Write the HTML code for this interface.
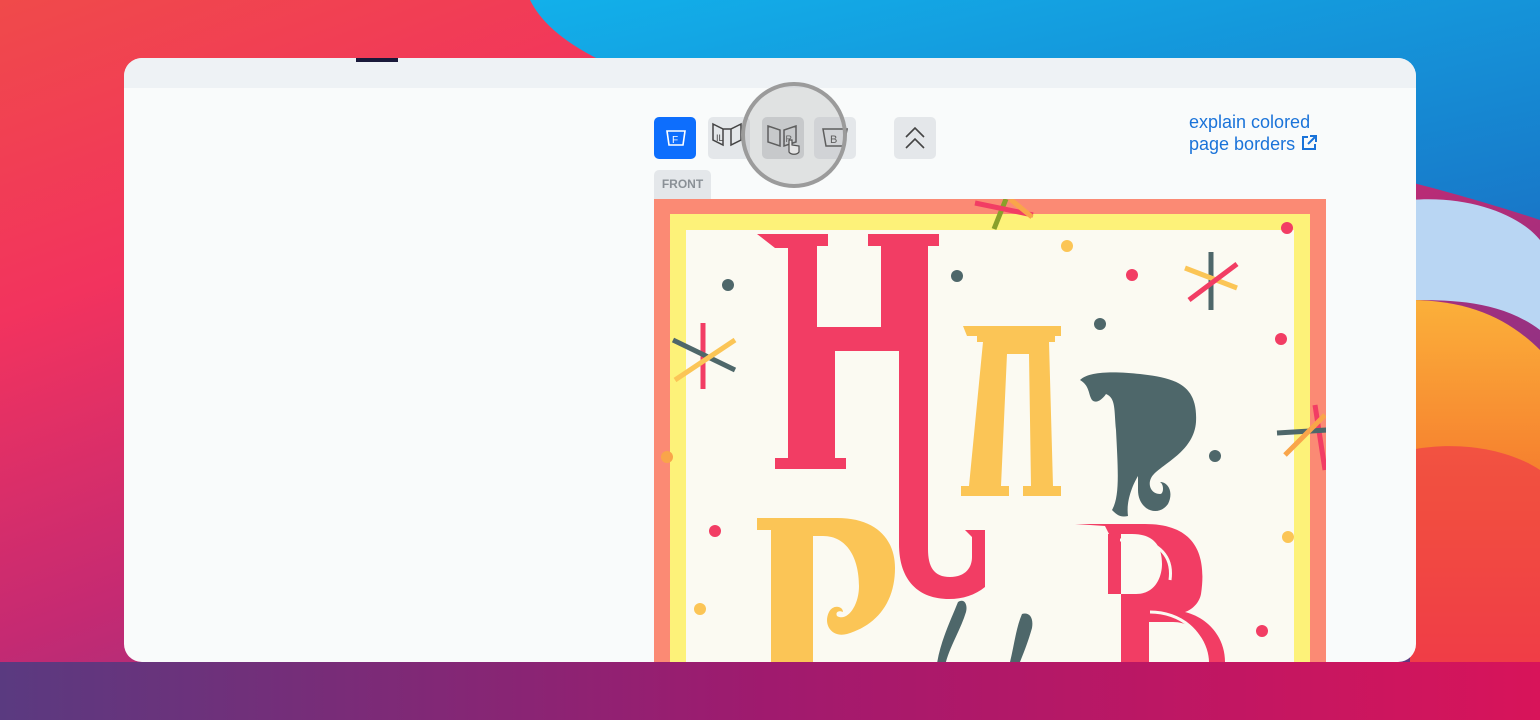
<!DOCTYPE html>
<html><head><meta charset="utf-8"><style>
html,body{margin:0;padding:0;width:1540px;height:720px;overflow:hidden;font-family:"Liberation Sans",sans-serif;background:#8a3386}
.bg{position:absolute;left:0;top:0;width:1540px;height:720px;background:
linear-gradient(160deg,#f04a4a 0%,#f2335e 25%,#c52a72 50%,#8a3386 75%,#4a3b7c 100%);}
.blue{position:absolute;left:0;top:0;width:1540px;height:720px;overflow:hidden}
.win{position:absolute;left:124px;top:58px;width:1292px;height:604px;background:#f9fbfb;border-radius:18px;overflow:hidden}
.top{position:absolute;left:0;top:0;width:100%;height:30px;background:#eef2f5}
.btn{position:absolute;top:59px;width:42px;height:42px;border-radius:5px;background:#e4e7ea}
</style></head><body>
<div class="bg"></div>
<svg class="blue" width="1540" height="720" viewBox="0 0 1540 720">
<defs><linearGradient id="bl" x1="0" y1="0" x2="1" y2="1"><stop offset="0" stop-color="#12b0ea"/><stop offset="1" stop-color="#1877c8"/></linearGradient>
<linearGradient id="or" x1="0" y1="0" x2="0" y2="1"><stop offset="0" stop-color="#fbb03a"/><stop offset="0.5" stop-color="#f5752c"/><stop offset="1" stop-color="#ee2b4c"/></linearGradient>
<linearGradient id="bt" x1="0" y1="0" x2="1" y2="0"><stop offset="0" stop-color="#5a3a80"/><stop offset="0.5" stop-color="#a01a6e"/><stop offset="1" stop-color="#d8145a"/></linearGradient></defs>
<path d="M530 0H1540V220C1450 190 1300 150 1100 120C900 90 700 60 600 60C560 40 540 20 530 0Z" fill="url(#bl)"/>
<path d="M1410 200C1470 195 1520 215 1540 240V330C1500 300 1450 300 1410 300Z" fill="#b9d6f3"/>
<path d="M1410 300C1470 300 1510 320 1540 350V720H1410Z" fill="url(#or)"/>
<path d="M1410 450C1460 440 1510 450 1540 470V720H1410Z" fill="#ef3c48" opacity="0.7"/>
<rect x="0" y="662" width="1540" height="58" fill="url(#bt)"/>
</svg>
<div class="win"><div class="top"></div>
<div style="position:absolute;left:232px;top:0;width:42px;height:4px;background:#1a1a3a"></div>
</div>
<div style="position:absolute;left:124px;top:58px;width:1292px;height:604px;border-radius:18px;overflow:hidden">
<div class="btn" style="left:530px;background:#0d6efd"></div>
<div class="btn" style="left:584px"></div>
<div class="btn" style="left:638px;background:#d6d9dc"></div>
<div class="btn" style="left:690px"></div>
<div class="btn" style="left:770px"></div>
<div style="position:absolute;left:530px;top:112px;width:57px;height:30px;background:#e4e7ea;border-radius:5px 5px 0 0;font-size:12px;font-weight:bold;color:#8a9096;text-align:center;line-height:28px">FRONT</div>
<div style="position:absolute;left:1065px;top:53px;font-size:18px;line-height:22px;color:#1a73d9">explain colored<br>page borders <svg width="18" height="18" viewBox="0 0 18 18" style="vertical-align:-2px"><path d="M8 3H3v12h12v-5M10 2h6v6M16 2l-8 8" fill="none" stroke="#1a73d9" stroke-width="2"/></svg></div>
</div>
<svg style="position:absolute;left:0;top:0" width="1540" height="720" viewBox="0 0 1540 720">
<defs><clipPath id="cc"><rect x="654" y="199" width="672" height="463"/></clipPath></defs>
<!-- icons -->
<path d="M667 131h18l-2 14h-14z" fill="none" stroke="#fff" stroke-width="1.6"/><text x="672" y="143" font-size="10" fill="#fff" font-family="Liberation Sans">F</text>
<path d="M713 124l10 5v16l-10-5zM741 124l-10 5v16l10-5zM723 129h8" fill="none" stroke="#444" stroke-width="1.5"/><text x="716" y="141" font-size="9" fill="#444" font-family="Liberation Sans">IL</text>
<path d="M768 126l12 4v16l-12-4zM796 126l-12 4v16l12-4z" fill="none" stroke="#444" stroke-width="1.5"/><text x="783" y="142" font-size="9" fill="#444" font-family="Liberation Sans">IR</text>
<path d="M789 140v12c2 3 8 3 10 0v-6l-7-1v-5z" fill="#fff" stroke="#333" stroke-width="1.2"/>
<path d="M823 129h24l-3 17h-18z" fill="none" stroke="#444" stroke-width="1.5"/><text x="830" y="143" font-size="11" fill="#444" font-family="Liberation Sans">B</text>
<path d="M906 137l9-9 9 9M906 148l9-9 9 9" fill="none" stroke="#444" stroke-width="1.6"/>
<circle cx="794" cy="135" r="51" fill="rgba(160,160,160,0.28)" stroke="#9b9b9b" stroke-width="4"/>
<!-- card -->
<g clip-path="url(#cc)">
<rect x="654" y="199" width="672" height="463" fill="#fb8a74"/>
<rect x="670" y="214" width="640" height="448" fill="#fdf279"/>
<rect x="686" y="230" width="608" height="432" fill="#fbfaf2"/>
<!-- H -->
<path d="M757 234h71v12h-11v81h64v-81h-13v-12h71v12h-11v303c0 18 6 28 22 28s22-10 22-20v-20l-7-7h20v57c-10 8-22 12-36 12-30 0-50-18-50-55v-193h-64v107h11v11h-71v-11h13v-210h-13z" fill="#f23d64"/>
<!-- A -->
<path d="M963 326h98v10h-6v6h-6l4 144h8v10h-38v-10h8l-2-132h-22l-6 132h8v10h-48v-10h8l14-144h-6v-6h-10z" fill="#fbc556"/>
<rect x="990" y="346" width="30" height="6" fill="#fbc556"/>
<!-- teal P -->
<path d="M1080 380c10-10 40-8 60-6 35 4 58 10 56 48-2 28-30 40-42 52-8 8-4 20 6 20 4 0 4-10 0-12 8 0 14 10 8 22-10 14-30 6-30-14v-14c-6 10-12 26-10 40-8 2-12-2-16-6 8-14 6-40 4-80-2-20 0-32-10-36-4 6-10 10-14 6-4-6-2-14-12-20z" fill="#4e676a"/>
<!-- yellow P -->
<path d="M757 518h80c40 0 58 22 58 50 0 36-20 58-48 66-16 4-24-10-18-22 4-8 14-6 14 0-4-2-8 0-6 4 10 6 22-10 22-30 0-28-12-50-36-50h-10v134h26v10h-82v-10h14v-140h-14z" fill="#fbc556"/>
<!-- B -->
<path d="M1075 524h70c50 0 62 30 56 70-2 10-10 16-16 18 24 6 40 26 40 50h-16c0-14-10-40-36-40h-24v40h-28v-128h-12l-4-8zM1108 534v60h28c20 0 26-18 26-30 0-20-10-30-30-30z" fill="#f23d64"/>
<path d="M1120 540h14c18 0 40 12 36 40M1150 612c30 0 56 20 56 50" fill="none" stroke="#fbfaf2" stroke-width="3"/>
<!-- teal partial -->
<path d="M958 602c6-4 10 2 8 10-6 20-20 40-22 60h-8c2-26 14-50 22-70zM1022 614c6-2 12 2 10 14-4 14-8 24-12 34h-10c4-16 6-34 12-48z" fill="#4e676a"/>
<!-- dots -->
<g fill="#4e676a"><circle cx="728" cy="285" r="6"/><circle cx="957" cy="276" r="6"/><circle cx="1100" cy="324" r="6"/><circle cx="1215" cy="456" r="6"/></g>
<g fill="#f23d64"><circle cx="1132" cy="275" r="6"/><circle cx="1281" cy="339" r="6"/><circle cx="715" cy="531" r="6"/><circle cx="1262" cy="631" r="6"/><circle cx="1287" cy="228" r="6"/></g>
<g fill="#fbc556"><circle cx="1067" cy="246" r="6"/><circle cx="700" cy="609" r="6"/><circle cx="1288" cy="537" r="6"/></g>
<circle cx="667" cy="457" r="6" fill="#f9a54a"/>
<!-- bursts -->
<g stroke-width="5">
<path d="M1211 252v58" stroke="#4e676a"/><path d="M1185 268l52 20" stroke="#fbc556"/><path d="M1237 264l-48 36" stroke="#f23d64"/>
<path d="M703 323v66" stroke="#f23d64"/><path d="M673 340l62 30" stroke="#4e676a"/><path d="M735 340l-60 40" stroke="#fbc556"/>
<path d="M1006 199l-12 30" stroke="#8aa02a"/><path d="M975 203l58 12" stroke="#f23d64"/><path d="M1010 199l22 18" stroke="#f9a54a"/>
<path d="M1315 405l10 65" stroke="#f23d64"/><path d="M1277 433l50-3" stroke="#4e676a"/><path d="M1325 415l-40 40" stroke="#f9a54a"/>
</g>
</g>
</svg>
</body></html>
